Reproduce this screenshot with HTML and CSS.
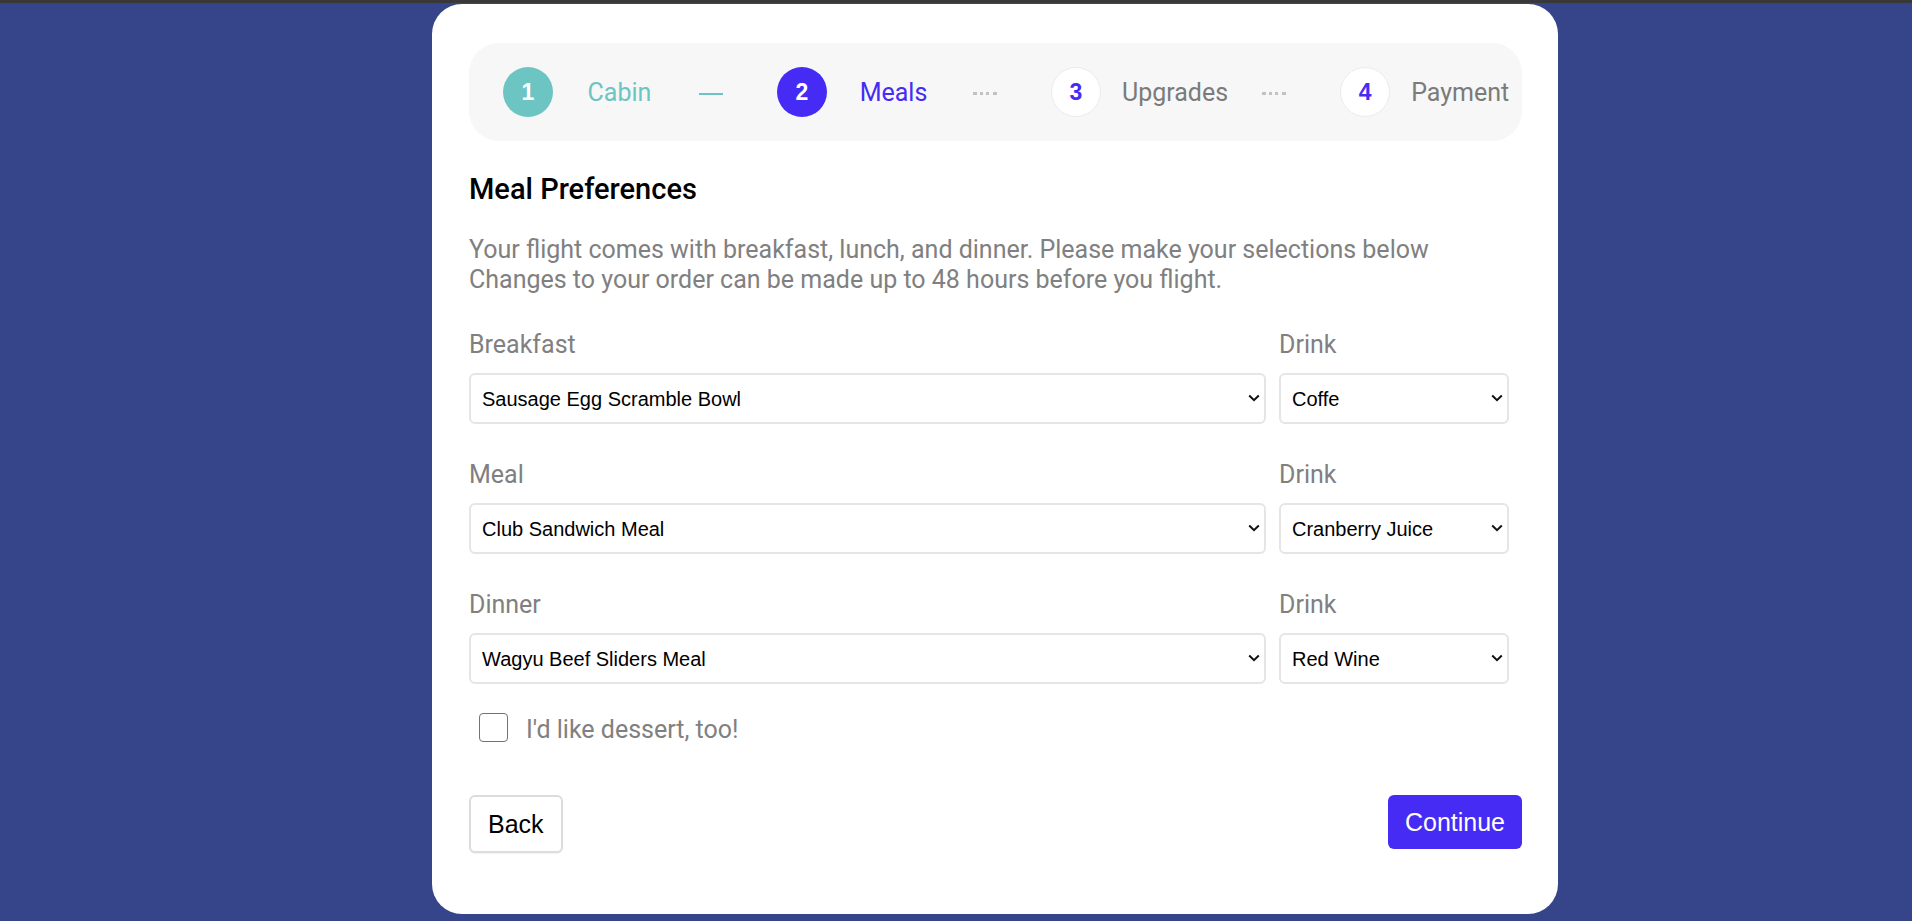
FILE: index.html
```html
<!DOCTYPE html>
<html lang="en">
<head>
<meta charset="utf-8">
<title>Meal Preferences</title>
<link rel="stylesheet" href="styles.css">
</head>
<body>
  <main class="card">
    <nav class="stepper">
      <div class="circle done">1</div>
      <div class="step-label done-text">Cabin</div>
      <div class="connector dash"></div>
      <div class="circle active">2</div>
      <div class="step-label active-text">Meals</div>
      <div class="connector dots"></div>
      <div class="circle todo">3</div>
      <div class="step-label">Upgrades</div>
      <div class="connector dots"></div>
      <div class="circle todo">4</div>
      <div class="step-label">Payment</div>
    </nav>

    <h1 class="title">Meal Preferences</h1>
    <p class="desc">Your flight comes with breakfast, lunch, and dinner. Please make your selections below<br>Changes to your order can be made up to 48 hours before you flight.</p>

    <div class="rows">
      <div class="row">
        <label class="field-label">Breakfast</label>
        <label class="field-label">Drink</label>
        <div class="select-wrap">
          <select class="select"><option>Sausage Egg Scramble Bowl</option></select>
          <svg class="chev" width="12" height="8" viewBox="0 0 12 8"><path d="M1.2 1.5 L6 6.2 L10.8 1.5" fill="none" stroke="#111" stroke-width="2"/></svg>
        </div>
        <div class="select-wrap">
          <select class="select"><option>Coffe</option></select>
          <svg class="chev" width="12" height="8" viewBox="0 0 12 8"><path d="M1.2 1.5 L6 6.2 L10.8 1.5" fill="none" stroke="#111" stroke-width="2"/></svg>
        </div>
      </div>
      <div class="row">
        <label class="field-label">Meal</label>
        <label class="field-label">Drink</label>
        <div class="select-wrap">
          <select class="select"><option>Club Sandwich Meal</option></select>
          <svg class="chev" width="12" height="8" viewBox="0 0 12 8"><path d="M1.2 1.5 L6 6.2 L10.8 1.5" fill="none" stroke="#111" stroke-width="2"/></svg>
        </div>
        <div class="select-wrap">
          <select class="select"><option>Cranberry Juice</option></select>
          <svg class="chev" width="12" height="8" viewBox="0 0 12 8"><path d="M1.2 1.5 L6 6.2 L10.8 1.5" fill="none" stroke="#111" stroke-width="2"/></svg>
        </div>
      </div>
      <div class="row">
        <label class="field-label">Dinner</label>
        <label class="field-label">Drink</label>
        <div class="select-wrap">
          <select class="select"><option>Wagyu Beef Sliders Meal</option></select>
          <svg class="chev" width="12" height="8" viewBox="0 0 12 8"><path d="M1.2 1.5 L6 6.2 L10.8 1.5" fill="none" stroke="#111" stroke-width="2"/></svg>
        </div>
        <div class="select-wrap">
          <select class="select"><option>Red Wine</option></select>
          <svg class="chev" width="12" height="8" viewBox="0 0 12 8"><path d="M1.2 1.5 L6 6.2 L10.8 1.5" fill="none" stroke="#111" stroke-width="2"/></svg>
        </div>
      </div>
    </div>

    <label class="check-row">
      <input type="checkbox" class="check">
      <span class="check-text">I'd like dessert, too!</span>
    </label>

    <div class="actions">
      <button class="btn btn-back">Back</button>
      <button class="btn btn-continue">Continue</button>
    </div>
  </main>
</body>
</html>
```

FILE: styles.css
```css
html, body {
  margin: 0;
  padding: 0;
}
body {
  background: #36458a;
  border-top: 3px solid #383838;
  min-height: 918px;
  font-family: Roboto, "Liberation Sans", sans-serif;
}
.card {
  box-sizing: border-box;
  width: 1126px;
  margin: 1px 0 0 432px;
  background: #fff;
  border-radius: 30px;
  padding: 39px 36px 61px 37px;
}
.stepper {
  display: flex;
  align-items: center;
  height: 98px;
  background: #f7f7f7;
  border-radius: 30px;
  padding: 0 34px;
}
.circle {
  box-sizing: border-box;
  flex: none;
  width: 50px;
  height: 50px;
  border-radius: 50%;
  display: flex;
  align-items: center;
  justify-content: center;
  font-family: "Liberation Sans", Arial, sans-serif;
  font-weight: bold;
  font-size: 23px;
}
.circle.done { background: #6cc4c3; color: #fff; }
.circle.active { background: #462bf4; color: #fff; }
.circle.todo { background: #fff; color: #462bf4; border: 1px solid #ebebeb; }
.step-label {
  flex: none;
  margin-left: 21px;
  min-width: 91px;
  text-align: center;
  font-size: 25px;
  color: #7b7b7b;
  white-space: nowrap;
}
.done-text { color: #6cc4c3; }
.active-text { color: #462bf4; }
.connector {
  flex: none;
  width: 24px;
  margin: 0 54px 0 34px;
}
.dash {
  height: 0;
  margin-top: 4px;
  border-top: 2px solid #6cc4c3;
}
.dots {
  height: 0;
  margin-top: 2px;
  border-top: 3px dotted #c2c2c2;
}
.title {
  margin: 31px 0 0;
  font-size: 29px;
  line-height: 34px;
  font-weight: 500;
  color: #000;
}
.desc {
  margin: 29px 0 0;
  font-size: 25px;
  line-height: 30px;
  color: #808080;
}
.rows {
  margin: 35px 13px 0 0;
  display: flex;
  flex-direction: column;
  gap: 36px;
}
.row {
  display: grid;
  grid-template-columns: 1fr 230px;
  column-gap: 13px;
  row-gap: 13px;
}
.field-label {
  font-size: 25px;
  line-height: 30px;
  color: #808080;
}
.select-wrap {
  position: relative;
}
.select {
  -webkit-appearance: none;
  appearance: none;
  box-sizing: border-box;
  width: 100%;
  height: 51px;
  border: 2px solid #e5e5e5;
  border-radius: 6px;
  background: #fff;
  padding: 0 30px 0 11px;
  font-family: "Liberation Sans", Arial, sans-serif;
  font-size: 20px;
  color: #000;
  outline: none;
}
.chev {
  position: absolute;
  right: 6px;
  top: 21px;
  pointer-events: none;
}
.check-row {
  display: flex;
  align-items: center;
  margin: 29px 0 0 10px;
  height: 29px;
}
.check {
  -webkit-appearance: none;
  appearance: none;
  box-sizing: border-box;
  flex: none;
  width: 29px;
  height: 29px;
  margin: 0;
  border: 1.5px solid #737373;
  border-radius: 4px;
  background: #fff;
}
.check-text {
  margin-left: 18px;
  padding-top: 4px;
  font-size: 25px;
  color: #808080;
}
.actions {
  margin-top: 53px;
  display: flex;
  justify-content: space-between;
  align-items: flex-start;
}
.btn {
  font-family: "Liberation Sans", Arial, sans-serif;
  font-size: 25px;
  line-height: 28px;
  padding: 13px 17px;
  border-radius: 6px;
  cursor: pointer;
}
.btn-back {
  background: #fff;
  color: #000;
  border: 2px solid #dcdcdc;
  box-shadow: 0 1px 1px rgba(0,0,0,0.05);
}
.btn-continue {
  background: #462bf4;
  color: #fff;
  border: none;
}
```
